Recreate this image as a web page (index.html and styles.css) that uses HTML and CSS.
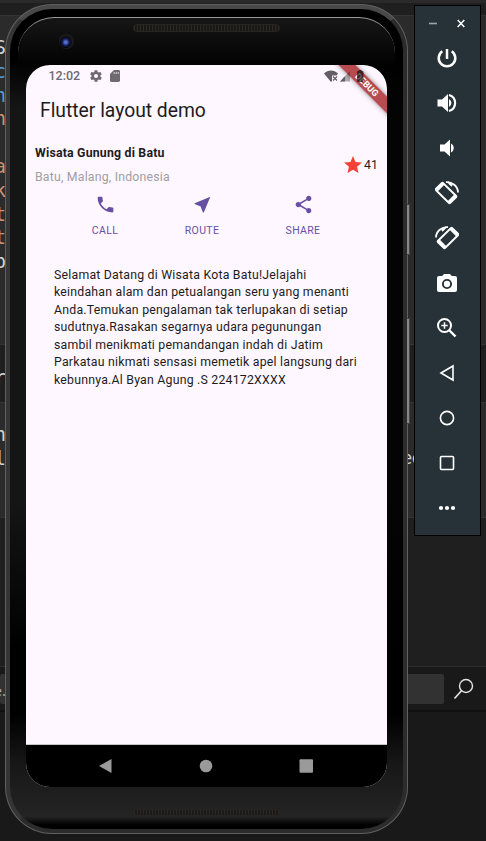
FILE: index.html
```
<!DOCTYPE html>
<html lang="id">
<head>
<meta charset="utf-8">
<title>Flutter layout demo</title>
<link rel="stylesheet" href="styles.css">
</head>
<body>
<div class="desktop">
  <div class="band strip"></div>
  <div class="band tabs"></div>
  <div class="band code first">
    <span>S</span><span class="blue">c</span><span class="blue">n</span><span class="orange">n</span><span></span><span class="orange">a</span><span class="orange">k</span><span class="orange">t</span><span class="orange">t</span><span>p</span>
  </div>
  <div class="band gap"><span>r</span></div>
  <div class="band code second">
    <span>n</span><span>l</span><span class="tail">ec</span>
  </div>
  <div class="band blank"></div>
  <div class="band search">
    <div class="field"><span>e.</span></div>
    <svg width="22" height="24" viewBox="0 0 22 24" fill="none" stroke="#e4e4e4" stroke-width="1.4"><circle cx="13" cy="9" r="6.5"/><path d="M8.5 13.8 1.5 21.5" stroke-width="1.7"/></svg>
  </div>
  <div class="band footer"></div>
</div>

<div class="phone">
  <div class="volume-key upper"></div>
  <div class="volume-key lower"></div>
  <div class="shell">
    <div class="top-bezel">
      <div class="camera"></div>
      <div class="speaker"></div>
    </div>
    <div class="screen">
      <div class="status">
        <span class="clock">12:02</span>
        <svg class="gear" width="14" height="14" viewBox="0 0 24 24"><path fill="#6e6a70" d="M19.4 13c.1-.6.1-1.400 0-2l2.100-1.600c.2-.2.3-.5.1-.7l-2-3.400c-.1-.2-.4-.3-.6-.2l-2.500 1a7 7 0 0 0-1.700-1L14.400 2.400a.5.5 0 0 0-.5-.4h-4a.5.5 0 0 0-.5.4L9 5.100a7 7 0 0 0-1.700 1l-2.500-1c-.2-.1-.5 0-.6.2l-2 3.400c-.1.2-.1.500.1.700L4.500 11a8 8 0 0 0 0 2l-2.100 1.600c-.2.200-.3.500-.1.700l2 3.400c.1.200.4.300.6.200l2.500-1a7 7 0 0 0 1.700 1l.4 2.700c0 .2.200.4.500.4h4c.2 0 .5-.2.500-.4l.4-2.700a7 7 0 0 0 1.700-1l2.500 1c.2.100.5 0 .6-.2l2-3.400c.1-.2.100-.5-.1-.7zM12 15.500a3.500 3.500 0 1 1 0-7 3.500 3.500 0 0 1 0 7z"/></svg>
        <svg class="card" width="10" height="12" viewBox="0 0 10 12"><path fill="#6e6a70" d="M4 0h4.500C9.400 0 10 .6 10 1.400v9.200c0 .8-.6 1.400-1.500 1.400h-7C.6 12 0 11.400 0 10.600V4z"/><path d="M4.200 2v2M6.200 2v2M8.200 2v2" stroke="#d8d2d9" stroke-width="1"/></svg>
        <svg class="signals" width="42" height="13" viewBox="0 0 42 13"><path fill="#625e63" d="M0 3.500C4-.5 10-.5 14 3.500l-1.500 2H8v5.500l-1 1z"/><path d="m9 6.500 4 4m0-4-4 4" stroke="#625e63" stroke-width="1.200"/><path fill="#000" fill-opacity=".3" d="M26 1v10.500H16z"/><path fill="#625e63" d="M21 6.200v5.300h-5z"/><path fill="#000" fill-opacity=".62" d="M34.700 0h3v1h.8a1 1 0 0 1 1 1v9a1 1 0 0 1-1 1H34a1 1 0 0 1-1-1V2a1 1 0 0 1 1-1h.700z"/></svg>
      </div>
      <h1>Flutter layout demo</h1>
      <div class="place">
        <div class="names"><strong>Wisata Gunung di Batu</strong><span>Batu, Malang, Indonesia</span></div>
        <svg width="18" height="17" viewBox="2 2 20 19"><path fill="#f44336" d="M12 17.270 18.180 21l-1.640-7.030L22 9.240l-7.190-.610L12 2 9.190 8.630 2 9.240l5.460 4.730L5.820 21z"/></svg>
        <span class="count">41</span>
      </div>
      <div class="actions">
        <div class="action"><svg viewBox="0 0 24 24"><path d="M6.620 10.790c1.440 2.830 3.760 5.140 6.590 6.590l2.200-2.200c.27-.27.67-.36 1.020-.240 1.120.37 2.330.57 3.570.57.550 0 1 .45 1 1V20c0 .55-.45 1-1 1-9.390 0-17-7.610-17-17 0-.55.450-1 1-1h3.500c.55 0 1 .45 1 1 0 1.250.2 2.450.57 3.570.11.350.03.740-.25 1.020z"/></svg><span>CALL</span></div>
        <div class="action"><svg viewBox="0 0 24 24"><path d="M21 3 3 10.530v.98l6.840 2.650L12.480 21h.98z"/></svg><span>ROUTE</span></div>
        <div class="action"><svg viewBox="0 0 24 24"><path d="M18 16.080c-.76 0-1.440.3-1.960.77L8.910 12.700c.05-.23.090-.46.090-.7s-.04-.47-.09-.7l7.050-4.110c.54.5 1.250.81 2.040.81 1.660 0 3-1.340 3-3s-1.340-3-3-3-3 1.340-3 3c0 .24.040.47.090.7L8.040 9.810C7.500 9.310 6.790 9 6 9c-1.660 0-3 1.340-3 3s1.340 3 3 3c.79 0 1.500-.31 2.040-.81l7.120 4.160c-.05.21-.08.43-.08.650 0 1.610 1.310 2.920 2.920 2.920s2.920-1.310 2.920-2.920-1.310-2.920-2.920-2.920z"/></svg><span>SHARE</span></div>
      </div>
      <p class="about">Selamat Datang di Wisata Kota Batu!Jelajahi<br>keindahan alam dan petualangan seru yang menanti<br>Anda.Temukan pengalaman tak terlupakan di setiap<br>sudutnya.Rasakan segarnya udara pegunungan<br>sambil menikmati pemandangan indah di Jatim<br>Parkatau nikmati sensasi memetik apel langsung dari<br>kebunnya.Al Byan Agung .S 224172XXXX</p>
      <div class="nav">
        <svg viewBox="0 0 16 16"><path d="M2 8 14.500 1v14z"/></svg>
        <svg viewBox="0 0 16 16"><circle cx="8" cy="8" r="6.300"/></svg>
        <svg viewBox="0 0 16 16"><rect x="1.500" y="1.200" width="13.500" height="13.500" rx="1"/></svg>
      </div>
      <div class="ribbon">DEBUG</div>
    </div>
    <div class="bottom-bezel"><div class="speaker"></div></div>
  </div>
</div>

<div class="toolbar">
  <div class="window-buttons">
    <svg width="8" height="9" viewBox="0 0 8 9"><path d="M0 4.500h8" stroke="#9da4a8" stroke-width="1.600"/></svg>
    <svg width="8" height="9" viewBox="0 0 8 9"><path d="m.7 1 6.600 7m0-7L.7 8" stroke="#fff" stroke-width="1.500"/></svg>
  </div>
  <svg class="tool" viewBox="0 0 24 24"><path class="line" d="M12 3v10M7.300 5.200a8.300 8.300 0 1 0 9.400 0" stroke-width="2.500"/></svg>
  <svg class="tool" viewBox="0 0 24 24"><path d="M2.500 8.500v7H7l6 5.500V3L7 8.500zM14 8v8a4.500 4.500 0 0 0 0-8z"/><path class="line" d="M14 4a8.300 8.300 0 0 1 0 16" stroke-width="2.200"/></svg>
  <svg class="tool" viewBox="0 0 24 24"><path d="M5 8.500v7h4.500L15 20.500v-17L9.500 8.500zM16 7.500v9a5 5 0 0 0 0-9z"/></svg>
  <svg class="tool" viewBox="0 0 24 24"><g transform="rotate(-45 11 12)"><path fill-rule="evenodd" d="M7 1h8a2 2 0 0 1 2 2v18a2 2 0 0 1-2 2H7a2 2 0 0 1-2-2V3c0-1.100.9-2 2-2zm0 4v14h8V5z"/></g><path class="line" d="M11 1.200c6-.5 12 4 12 10.300M13 1l4 4" stroke-width="1.800"/></svg>
  <svg class="tool" viewBox="0 0 24 24"><g transform="rotate(45 13 12)"><path fill-rule="evenodd" d="M9 1h8a2 2 0 0 1 2 2v18a2 2 0 0 1-2 2H9a2 2 0 0 1-2-2V3c0-1.100.9-2 2-2zm0 4v14h8V5z"/></g><path class="line" d="M13 1.200c-6-.5-12 4-12 10.300M11 1 7 5" stroke-width="1.800"/></svg>
  <svg class="tool" viewBox="0 0 24 24"><path d="M9 3 7.200 5H4a2 2 0 0 0-2 2v12c0 1.100.9 2 2 2h16a2 2 0 0 0 2-2V7a2 2 0 0 0-2-2h-3.200L15 3z"/><circle cx="12" cy="13" r="4.100" fill="none" stroke="#263238" stroke-width="1.900"/></svg>
  <svg class="tool" viewBox="0 0 24 24"><circle class="line" cx="9.500" cy="9.500" r="6.500" stroke-width="2"/><path class="line" d="m14.500 14.500 6 6" stroke-width="2.400"/><path class="line" d="M6.300 9.500h6.400M9.500 6.300v6.400" stroke-width="1.500"/></svg>
  <svg class="tool" viewBox="0 0 24 24"><path class="line" d="M6 12 18 5v14z" stroke-width="1.600"/></svg>
  <svg class="tool" viewBox="0 0 24 24"><circle class="line" cx="12" cy="12" r="6.600" stroke-width="1.600"/></svg>
  <svg class="tool" viewBox="0 0 24 24"><rect class="line" x="5.500" y="5.500" width="13" height="13" rx="1" stroke-width="1.600"/></svg>
  <svg class="tool" viewBox="0 0 24 24"><circle cx="6" cy="12" r="2.100"/><circle cx="12" cy="12" r="2.100"/><circle cx="18" cy="12" r="2.100"/></svg>
</div>
</body>
</html>
```
FILE: styles.css
```
* { box-sizing: border-box; }
body { margin: 0; width: 486px; height: 841px; overflow: hidden; position: relative; background: #191919; font-family: Roboto, sans-serif; }

/* editor window behind the emulator */
.desktop { display: flex; flex-direction: column; height: 841px; font: 19px/23.8px "DejaVu Sans Mono", monospace; color: #d4d4d4; }
.band { flex: none; overflow: hidden; }
.band span { display: flex; justify-content: flex-end; width: 6px; height: 23.8px; }
.strip { height: 3px; background: #2a2a2a; }
.tabs { height: 12px; background: #1f1f1f; }
.code { background: #2b2b2b; }
.first { height: 329px; padding-top: 20px; border-top: 1px solid #333; }
.gap { height: 58px; padding-top: 21px; background: #1f1f1f; border-top: 1px solid #353535; }
.second { height: 115px; padding-top: 20px; border-top: 1px solid #353535; display: grid; grid-template-columns: 402px auto; align-content: start; }
.second span:first-child { grid-column: 1 / 3; }
.second .tail { width: 20px; justify-content: flex-start; font-size: 17px; letter-spacing: -1px; }
.blue { color: #569cd6; }
.orange { color: #ce9178; }
.blank { height: 149px; background: #1f1f1f; border-top: 1px solid #333; }
.search { height: 46px; display: flex; align-items: center; gap: 9px; border-top: 1px solid #2d2d2d; border-bottom: 2px solid #101010; background: #191919; }
.field { width: 444px; height: 30px; background: #323232; border-radius: 2px; line-height: 32px; font-size: 15px; font-family: "Noto Sans", sans-serif; color: #aaa; }
.search svg { margin-top: 1px; }
.footer { flex: 1; background: #191919; }

/* handset */
.phone { position: absolute; left: 5px; top: 4px; width: 403px; height: 830px; padding: 1px; border-radius: 47px; background: #606060; }
.shell { height: 828px; border: 4px solid #2c2c2c; border-top-color: #484848; border-left-color: #353535; border-radius: 46px; padding: 8px 16px 0; background: linear-gradient(90deg, transparent 50%, rgba(0, 0, 0, .8) 97%) 0 0 / 100% 700px no-repeat, linear-gradient(#000, #000 6%, #151515 12%, #151515 60%, #000 78%, #000 86%, #171717 92%, #242424 98.500%, #000 99.500%); }
.volume-key { position: absolute; left: 402px; width: 3px; background: #8a8587; border: 1px solid #454545; border-left: 0; }
.upper { top: 200px; height: 51px; }
.lower { top: 314px; height: 106px; }
.top-bezel { height: 48px; display: flex; align-items: flex-start; margin: 0 -8px; padding: 16px 0 0 41px; border-top: 1.500px solid #999; border-radius: 36px 36px 0 0; background: linear-gradient(#161616, #0a0a0a 60%, #020202); }
.camera { width: 15px; height: 15px; border-radius: 50%; background: radial-gradient(circle at 45% 55%, #5570cf 0 10%, #17205c 28%, #08080d 46%, #1b1b1b 55%); }
.speaker { width: 147px; height: 8px; border-radius: 4px; border: 1px solid #272421; background: repeating-linear-gradient(90deg, #2d2925 0 1px, #1a1816 1px 3px); }
.top-bezel .speaker { margin: -10px 0 0 59px; }
.screen { position: relative; display: flex; flex-direction: column; width: 361px; height: 722px; border-radius: 24px; overflow: hidden; background: #fef7ff; color: #1d1b20; }
.status { position: relative; z-index: 2; height: 22px; flex: none; display: flex; align-items: center; padding: 0 21px 0 22.500px; color: #6e6a70; font-size: 12.500px; font-weight: 500; }
.clock { width: 40px; margin-top: -1px; }
.card { margin-left: 7px; }
.signals { margin-left: auto; }
h1 { margin: 12px 0 0 14px; height: 24px; font-size: 19.300px; line-height: 24px; font-weight: 400; white-space: nowrap; }
.place { display: flex; align-items: center; height: 50px; margin: 17px 9px 0 9px; font-size: 12.300px; }
.names { flex: 1; display: flex; flex-direction: column; line-height: 17px; gap: 7px; letter-spacing: .2px; }
.names strong { font-weight: 700; }
.names span { color: #9e9e9e; }
.place svg { margin-top: -1px; }
.count { margin-left: 2.500px; width: 14px; letter-spacing: .2px; }
.actions { display: flex; gap: 37px; margin: 4px 0 0 49px; height: 44px; color: #6750a4; }
.action { width: 60px; display: flex; flex-direction: column; align-items: center; gap: 9px; }
.action:last-child { margin-left: 4px; }
.action svg { width: 21px; height: 21px; fill: #6750a4; flex: none; }
.action span { font-size: 10.500px; line-height: 13px; letter-spacing: .35px; }
.about { margin: 28.500px 0 0 28px; font-size: 12.300px; line-height: 17.550px; letter-spacing: .22px; white-space: nowrap; }
.nav { margin-top: auto; height: 43px; flex: none; border-top: 1px solid #c8c4ca; background: #000; display: flex; justify-content: center; align-items: center; gap: 84.500px; padding-right: 2px; }
.nav svg { width: 16px; height: 16px; fill: #9a9a9a; }
.ribbon { position: absolute; right: -33px; top: 12px; width: 110px; height: 12px; padding-left: 5px; transform: rotate(45deg); background: rgba(160, 18, 22, .75); color: #fff; box-shadow: 0 0 5px rgba(0, 0, 0, .45); text-align: center; font-size: 9px; line-height: 12px; font-weight: 700; z-index: 1; }
.bottom-bezel { display: flex; justify-content: center; padding-top: 22px; }
.bottom-bezel .speaker { height: 7px; opacity: .8; }

/* emulator controls */
.toolbar { position: absolute; left: 414px; top: 5px; width: 67px; height: 531px; padding-right: 2px; border: 1px solid #000; background: #263238; display: flex; flex-direction: column; align-items: center; gap: 21px; }
.window-buttons { height: 9px; margin-top: 12.500px; margin-bottom: -2.500px; display: flex; gap: 20px; }
.tool { width: 24px; height: 24px; fill: #fff; flex: none; }
.line { fill: none; stroke: #fff; }
```
